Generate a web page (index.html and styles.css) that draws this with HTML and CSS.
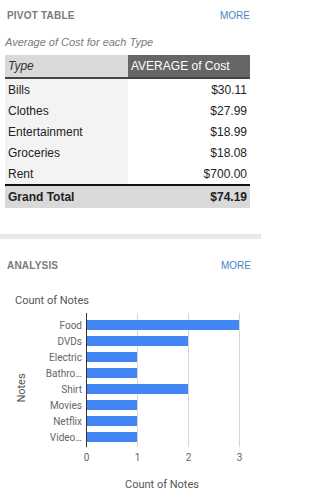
FILE: index.html
```html
<!DOCTYPE html>
<html>
<head>
<meta charset="utf-8">
<link rel="stylesheet" href="styles.css">
</head>
<body>
<section class="card card-pivot">
  <div class="card-head">
    <span class="card-title">PIVOT TABLE</span>
    <span class="card-more">MORE</span>
  </div>
  <div class="pivot-caption">Average of Cost for each Type</div>
  <table class="pivot">
    <thead>
      <tr><th class="col-type">Type</th><th class="col-val">AVERAGE of Cost</th></tr>
    </thead>
    <tbody>
      <tr><td class="lbl">Bills</td><td class="num">$30.11</td></tr>
      <tr><td class="lbl">Clothes</td><td class="num">$27.99</td></tr>
      <tr><td class="lbl">Entertainment</td><td class="num">$18.99</td></tr>
      <tr><td class="lbl">Groceries</td><td class="num">$18.08</td></tr>
      <tr><td class="lbl">Rent</td><td class="num">$700.00</td></tr>
    </tbody>
    <tfoot>
      <tr><td class="lbl">Grand Total</td><td class="num">$74.19</td></tr>
    </tfoot>
  </table>
</section>
<section class="card card-analysis">
  <div class="card-head">
    <span class="card-title">ANALYSIS</span>
    <span class="card-more">MORE</span>
  </div>
  <svg class="chart" width="261" height="229" viewBox="0 0 261 229">
    <text class="c-title" x="15" y="32">Count of Notes</text>
    <g class="grid">
      <line x1="137.5" y1="41" x2="137.5" y2="175"/>
      <line x1="188.5" y1="41" x2="188.5" y2="175"/>
      <line x1="239.5" y1="41" x2="239.5" y2="175"/>
    </g>
    <g class="bars">
      <rect x="87" y="48" width="152" height="10"/>
      <rect x="87" y="64" width="101" height="10"/>
      <rect x="87" y="80" width="50" height="10"/>
      <rect x="87" y="96" width="50" height="10"/>
      <rect x="87" y="112" width="101" height="10"/>
      <rect x="87" y="128" width="50" height="10"/>
      <rect x="87" y="144" width="50" height="10"/>
      <rect x="87" y="160" width="50" height="10"/>
    </g>
    <line class="axis" x1="86.5" y1="41" x2="86.5" y2="175"/>
    <g class="cats">
      <text x="82" y="56.5">Food</text>
      <text x="82" y="72.5">DVDs</text>
      <text x="82" y="88.5">Electric</text>
      <text x="82" y="104.5">Bathro…</text>
      <text x="82" y="120.5">Shirt</text>
      <text x="82" y="136.5">Movies</text>
      <text x="82" y="152.5">Netflix</text>
      <text x="82" y="168.5">Video…</text>
    </g>
    <g class="ticks">
      <text x="86.5" y="189">0</text>
      <text x="137.5" y="189">1</text>
      <text x="188.5" y="189">2</text>
      <text x="239.5" y="189">3</text>
    </g>
    <text class="x-title" x="162" y="216">Count of Notes</text>
    <text class="y-title" transform="translate(25 116) rotate(-90)">Notes</text>
  </svg>
</section>
</body>
</html>
```

FILE: styles.css
```css
html {
  background: #fff;
}
html, body {
  margin: 0;
  padding: 0;
}
body {
  width: 261px;
  height: 500px;
  overflow: hidden;
  background: #e8e8e8;
  font-family: "Liberation Sans", Arial, sans-serif;
  display: flex;
  flex-direction: column;
  gap: 5px;
}
.card {
  background: #fff;
}
.card-pivot {
  padding: 8px 11px 26px 5px;
}
.card-analysis {
  padding: 19px 0 0 0;
  flex: 1;
}
.card-head {
  display: flex;
  justify-content: space-between;
  align-items: center;
  height: 14px;
  padding-left: 2px;
}
.card-analysis .card-head {
  padding: 0 10px 0 7px;
}
.card-title {
  font-size: 10px;
  font-weight: bold;
  color: #7a7a7a;
  letter-spacing: 0.2px;
}
.card-more {
  font-size: 10px;
  color: #4a86c5;
}
.pivot-caption {
  margin-top: 13px;
  height: 14px;
  line-height: 14px;
  font-size: 11px;
  font-style: italic;
  color: #7a7a7a;
  margin-bottom: 6px;
}
.pivot {
  width: 245px;
  border-collapse: collapse;
  font-size: 12px;
  color: #222;
}
.pivot th, .pivot td {
  padding: 0 3px;
  white-space: nowrap;
}
.pivot th {
  height: 22px;
  font-weight: normal;
  text-align: left;
  border-bottom: 2px solid #444;
}
.col-type {
  width: 117px;
  background: #d9d9d9;
  font-style: italic;
  color: #333;
}
.col-val {
  background: #666;
  color: #fff;
}
.pivot tbody td {
  height: 21px;
}
.lbl {
  background: #f3f3f3;
}
.num {
  text-align: right;
  background: #fff;
}
.pivot tfoot td {
  height: 22px;
  font-weight: bold;
  background: #d9d9d9;
  border-top: 2px solid #111;
}
.chart {
  display: block;
  font-family: Roboto, "Liberation Sans", sans-serif;
}
.c-title {
  font-size: 11px;
  fill: #555;
}
.grid line {
  stroke: #d6d6d6;
  stroke-width: 1;
}
.bars rect {
  fill: #4285f4;
}
.axis {
  stroke: #333;
  stroke-width: 1;
}
.cats text {
  font-size: 10px;
  fill: #666;
  text-anchor: end;
}
.ticks text {
  font-size: 10px;
  fill: #666;
  text-anchor: middle;
}
.x-title, .y-title {
  font-size: 11px;
  fill: #555;
  text-anchor: middle;
}
```
